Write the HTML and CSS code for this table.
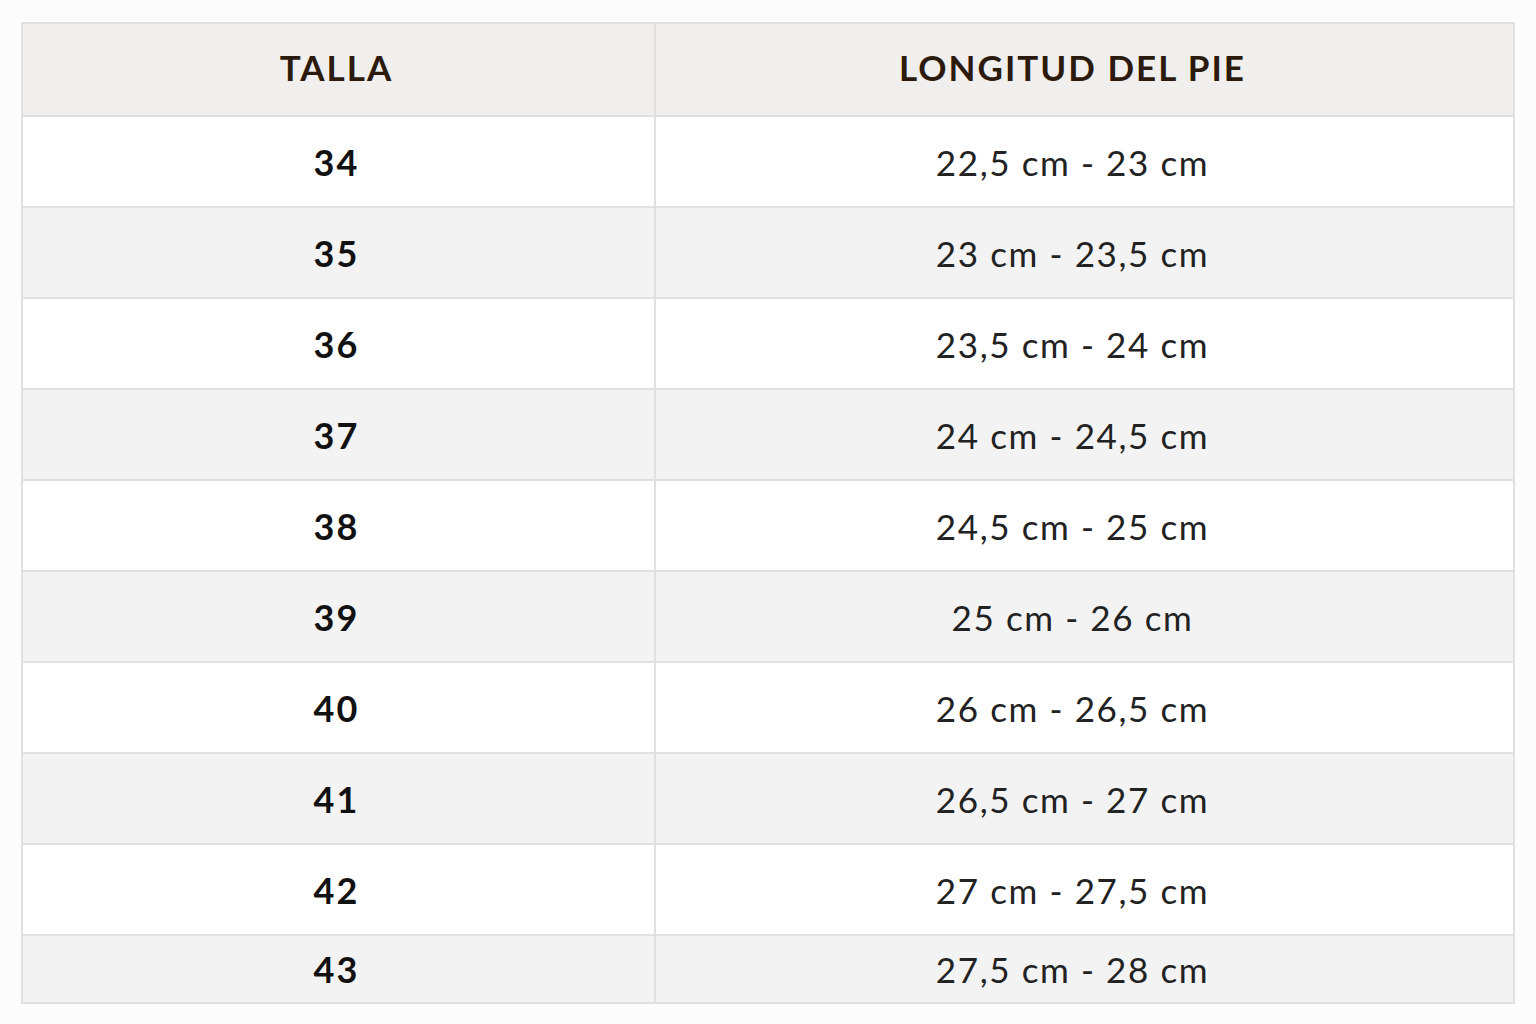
FILE: index.html
```html
<!DOCTYPE html>
<html lang="es">
<head>
<meta charset="utf-8">
<title>Guía de tallas</title>
<link rel="stylesheet" href="styles.css">
</head>
<body>
<div class="wrap">
<table class="sizes">
  <thead>
    <tr><th class="c1">TALLA</th><th class="c2">LONGITUD DEL PIE</th></tr>
  </thead>
  <tbody>
    <tr><td class="size">34</td><td class="len">22,5 cm - 23 cm</td></tr>
    <tr><td class="size">35</td><td class="len">23 cm - 23,5 cm</td></tr>
    <tr><td class="size">36</td><td class="len">23,5 cm - 24 cm</td></tr>
    <tr><td class="size">37</td><td class="len">24 cm - 24,5 cm</td></tr>
    <tr><td class="size">38</td><td class="len">24,5 cm - 25 cm</td></tr>
    <tr><td class="size">39</td><td class="len">25 cm - 26 cm</td></tr>
    <tr><td class="size">40</td><td class="len">26 cm - 26,5 cm</td></tr>
    <tr><td class="size">41</td><td class="len">26,5 cm - 27 cm</td></tr>
    <tr><td class="size">42</td><td class="len">27 cm - 27,5 cm</td></tr>
    <tr class="last"><td class="size">43</td><td class="len">27,5 cm - 28 cm</td></tr>
  </tbody>
</table>
</div>
</body>
</html>
```
FILE: styles.css
```css
html, body {
  margin: 0;
  padding: 0;
  background: #fcfcfc;
}
.wrap {
  padding: 22px 21px 0 21px;
  width: 1494px;
}
.sizes {
  width: 1494px;
  border-collapse: collapse;
  table-layout: fixed;
  font-family: Lato, "Open Sans", sans-serif;
}
.sizes th, .sizes td {
  border: 2px solid #e0e0e0;
  text-align: center;
  vertical-align: middle;
  padding: 0;
}
.c1 { width: 627px; }
.sizes th {
  background: #f0efee;
  color: #2c1a0d;
  font-weight: 700;
  font-size: 35px;
  letter-spacing: 2px;
  height: 86px;
  padding-bottom: 5px;
}
.sizes td { height: 89px; }
.sizes th.c1, .sizes td.size { padding-right: 4px; }
.sizes th.c2, .sizes td.len { padding-right: 24px; }
.sizes tbody tr:nth-child(odd) td { background: #ffffff; }
.sizes tbody tr:nth-child(even) td { background: #f3f3f3; }
.sizes tr.last td { height: 66px; }
.size {
  font-weight: 700;
  font-size: 36px;
  color: #111;
  letter-spacing: 2px;
}
.len {
  font-weight: 400;
  font-size: 35px;
  color: #222;
  letter-spacing: 1.6px;
}
```
